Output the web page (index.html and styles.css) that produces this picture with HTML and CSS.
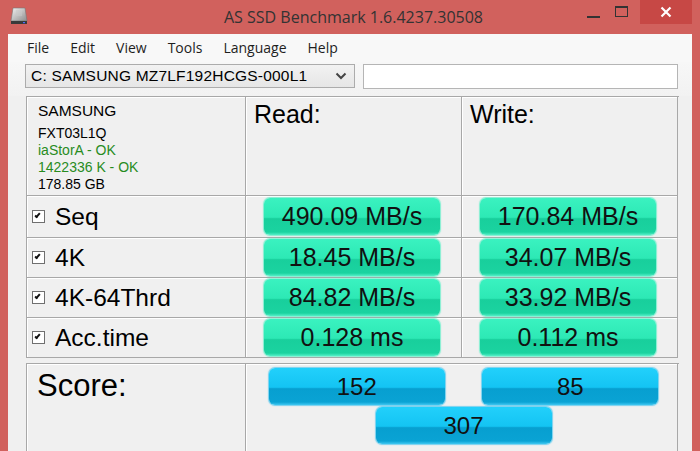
FILE: index.html
```html
<!DOCTYPE html>
<html>
    <head>
        <meta charset="UTF-8">
        <title>AS SSD Benchmark</title>
        <link rel="stylesheet" href="styles.css">
    </head>
    <body>
        <div class="window">
            <div class="titlebar">
                <svg class="app-icon" width="20" height="20" viewBox="0 0 20 20">
                    <defs>
                        <linearGradient id="drive" x1="0" y1="0" x2="1" y2="1">
                            <stop offset="0" stop-color="#f2f2f2"/>
                            <stop offset="1" stop-color="#8d8d8d"/>
                        </linearGradient>
                    </defs>
                    <path d="M4 2 H16 L18 15 H2 Z" fill="url(#drive)" stroke="#777" stroke-width="0.6"/>
                    <path d="M8 4 V10 M10 4 V10 M12 4 V10" stroke="#c9c9c9" stroke-width="1"/>
                    <rect x="2" y="15" width="16" height="3" fill="#3a3a3a"/>
                    <rect x="14" y="16" width="2" height="1.2" fill="#4a6cff"/>
                </svg>
                <div class="title">AS SSD Benchmark 1.6.4237.30508</div>
                <div class="controls">
                    <span class="ctl ctl-min"><i></i></span>
                    <span class="ctl ctl-max"><i></i></span>
                    <span class="ctl ctl-close">
                        <svg width="12" height="12" viewBox="0 0 12 12"><path d="M1.5 1.5 L10.5 10.5 M10.5 1.5 L1.5 10.5" stroke="#fff" stroke-width="2.2"/></svg>
                    </span>
                </div>
            </div>
            <div class="client">
                <ul class="menubar">
                    <li>File</li>
                    <li>Edit</li>
                    <li>View</li>
                    <li>Tools</li>
                    <li>Language</li>
                    <li>Help</li>
                </ul>
                <div class="toolbar">
                    <div class="combo">
                        <span>C: SAMSUNG MZ7LF192HCGS-000L1</span>
                        <svg width="12" height="8" viewBox="0 0 12 8"><path d="M1.5 1.5 L6 6 L10.5 1.5" fill="none" stroke="#444" stroke-width="2"/></svg>
                    </div>
                    <div class="textbox"></div>
                </div>

                <div class="results">
                    <div class="cell info">
                        <p class="vendor">SAMSUNG</p>
                        <p>FXT03L1Q</p>
                        <p class="ok">iaStorA - OK</p>
                        <p class="ok">1422336 K - OK</p>
                        <p>178.85 GB</p>
                    </div>
                    <div class="cell heading">Read:</div>
                    <div class="cell heading">Write:</div>

                    <div class="cell test"><span class="check"></span>Seq</div>
                    <div class="cell val"><div class="bar">490.09 MB/s</div></div>
                    <div class="cell val"><div class="bar">170.84 MB/s</div></div>

                    <div class="cell test"><span class="check"></span>4K</div>
                    <div class="cell val"><div class="bar">18.45 MB/s</div></div>
                    <div class="cell val"><div class="bar">34.07 MB/s</div></div>

                    <div class="cell test"><span class="check"></span>4K-64Thrd</div>
                    <div class="cell val"><div class="bar">84.82 MB/s</div></div>
                    <div class="cell val"><div class="bar">33.92 MB/s</div></div>

                    <div class="cell test"><span class="check"></span>Acc.time</div>
                    <div class="cell val"><div class="bar">0.128 ms</div></div>
                    <div class="cell val"><div class="bar">0.112 ms</div></div>
                </div>

                <div class="score">
                    <div class="cell score-label">Score:</div>
                    <div class="cell score-vals">
                        <div class="bar blue">152</div>
                        <div class="bar blue">85</div>
                        <div class="bar blue total">307</div>
                    </div>
                </div>
            </div>
        </div>
    </body>
</html>
```

FILE: styles.css
```css
*, *::before, *::after {
    box-sizing: border-box;
}
html, body {
    margin: 0;
    padding: 0;
    width: 700px;
    height: 451px;
    overflow: hidden;
}
.window {
    height: 451px;
    padding: 0 8px;
    background-color: rgb(209, 97, 93);
    font-family: "Liberation Sans", Arial, sans-serif;
    color: #000;
}
.titlebar {
    position: relative;
    height: 34px;
    display: flex;
    align-items: flex-start;
}
.app-icon {
    margin: 6px 0 0 1px;
}
.title {
    flex: 1;
    text-align: center;
    font-family: "Open Sans", sans-serif;
    font-size: 16px;
    color: #333;
    padding-top: 6px;
    margin-left: -14px;
}
.controls {
    position: absolute;
    top: 0;
    right: -8px;
    display: flex;
    height: 24px;
}
.ctl {
    display: flex;
    align-items: center;
    justify-content: center;
    height: 24px;
}
.ctl-min {
    width: 28px;
}
.ctl-min i {
    display: block;
    width: 13px;
    height: 2px;
    margin-top: 9px;
    background-color: #333;
}
.ctl-max {
    width: 28px;
    margin-right: 5px;
}
.ctl-max i {
    display: block;
    width: 13px;
    height: 11px;
    margin-top: -2px;
    border: 1px solid #333;
    border-top-width: 2px;
}
.ctl-close {
    width: 52px;
    margin-right: 8px;
    background-color: rgb(199, 72, 69);
}
.client {
    height: 417px;
    background-color: #f0f0f0;
}
.menubar {
    display: flex;
    gap: 21px;
    list-style: none;
    margin: 0;
    padding: 4px 0 0 19px;
    height: 28px;
    background-color: #f8f8f8;
    font-family: "Open Sans", sans-serif;
    font-size: 14px;
    color: #1e1e1e;
}
.toolbar {
    display: flex;
    gap: 8px;
    padding: 2px 14px 0 17px;
    height: 34px;
    background: linear-gradient(#f7f7f7, #f2f2f2);
}
.combo {
    width: 330px;
    height: 24px;
    display: flex;
    align-items: center;
    justify-content: space-between;
    padding: 0 7px 0 5px;
    border: 1px solid #acacac;
    background: linear-gradient(#f2f2f2, #e6e6e6);
    font-size: 15.5px;
    letter-spacing: 0.2px;
}
.textbox {
    flex: 1;
    height: 25px;
    border: 1px solid #b5b5b5;
    background-color: #fff;
}
.results, .score {
    display: grid;
    margin-left: 18px;
    border-top: 1px solid #a8a8a8;
    border-left: 1px solid #a8a8a8;
    width: 653px;
}
.results {
    grid-template-columns: 219px 216px 216px;
    grid-template-rows: 99px 42px 40px 40px 40px;
}
.score {
    margin-top: 5px;
    grid-template-columns: 219px 432px;
    height: 100px;
}
.cell {
    border-right: 1px solid #a8a8a8;
    border-bottom: 1px solid #a8a8a8;
    box-shadow: inset 1px 1px 0 #fff;
}
.info {
    padding: 5px 0 0 11px;
    font-size: 14px;
}
.info p {
    margin: 0;
    line-height: 17px;
}
.info .vendor {
    font-size: 15.5px;
    line-height: 18px;
    margin-bottom: 5px;
}
.info .ok {
    color: rgb(40, 140, 30);
}
.heading {
    padding: 3px 0 0 8px;
    font-size: 25px;
}
.test {
    display: flex;
    align-items: center;
    padding-left: 5px;
    font-size: 24.5px;
}
.check {
    position: relative;
    width: 13px;
    height: 13px;
    margin-right: 10px;
    border: 1px solid #6f6f6f;
    background-color: #fff;
}
.check::after {
    content: "";
    position: absolute;
    left: 3px;
    top: 1px;
    width: 3px;
    height: 6px;
    border: solid #111;
    border-width: 0 2px 2px 0;
    transform: rotate(40deg);
}
.val {
    display: flex;
    align-items: center;
    justify-content: center;
    padding-right: 3px;
}
.bar {
    width: 176px;
    height: 37px;
    border-radius: 6px;
    text-align: center;
    line-height: 37px;
    font-size: 25px;
    color: #111;
    background: linear-gradient(#3af2c0 0, #2de9b5 52%, #18cf9c 56%, #1bd3a0 92%, #55f0c8 100%);
    box-shadow: 0 0 1px 1px rgba(60, 240, 190, 0.6);
}
.score-label {
    padding: 4px 0 0 10px;
    font-size: 31px;
}
.score-vals {
    display: grid;
    grid-template-columns: 1fr 1fr;
    justify-items: center;
    align-content: start;
    padding: 4px 0 0 4px;
    row-gap: 2px;
}
.bar.blue {
    font-size: 24px;
    background: linear-gradient(#22d0fb 0, #14c4f3 52%, #079fd0 56%, #0aa3d4 92%, #3fc8f2 100%);
    box-shadow: 0 0 1px 1px rgba(40, 190, 240, 0.6);
}
.bar.total {
    grid-column: 1 / 3;
}
```
